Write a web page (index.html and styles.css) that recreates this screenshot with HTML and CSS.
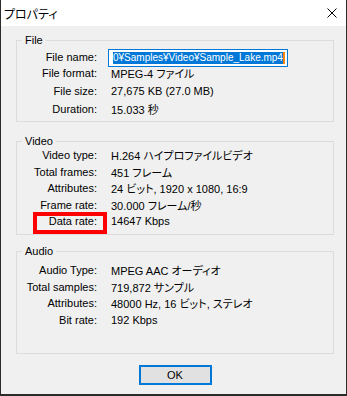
FILE: index.html
```html
<!DOCTYPE html>
<html lang="ja">
<head>
    <meta charset="UTF-8">
    <title>プロパティ</title>
    <link rel="stylesheet" href="styles.css">
</head>
<body>
    <div class="window">
        <div class="titlebar">
            <span class="title">プロパティ</span>
            <svg class="close" width="10" height="10" viewBox="0 0 10 10">
                <path d="M0.5 0.5 L9.5 9.5 M9.5 0.5 L0.5 9.5" stroke="#000" stroke-width="1" fill="none"/>
            </svg>
        </div>
        <div class="content">
            <section class="group group-file">
                <div class="group-title">File</div>
                <div class="rows rows-file">
                    <div class="row">
                        <span class="label">File name:</span>
                        <div class="field"><span class="selected">0¥Samples¥Video¥Sample_Lake.mp4</span><span class="caret"></span></div>
                    </div>
                    <div class="row"><span class="label">File format:</span><span class="value">MPEG-4 ファイル</span></div>
                    <div class="row"><span class="label">File size:</span><span class="value">27,675 KB (27.0 MB)</span></div>
                    <div class="row"><span class="label">Duration:</span><span class="value">15.033 秒</span></div>
                </div>
            </section>

            <section class="group group-video">
                <div class="group-title">Video</div>
                <div class="rows">
                    <div class="row"><span class="label">Video type:</span><span class="value">H.264 ハイプロファイルビデオ</span></div>
                    <div class="row"><span class="label">Total frames:</span><span class="value">451 フレーム</span></div>
                    <div class="row"><span class="label">Attributes:</span><span class="value">24 ビット, 1920 x 1080, 16:9</span></div>
                    <div class="row"><span class="label">Frame rate:</span><span class="value">30.000 フレーム/秒</span></div>
                    <div class="row row-marked">
                        <span class="label">Data rate:</span><span class="value">14647 Kbps</span>
                        <span class="mark"></span>
                    </div>
                </div>
            </section>

            <section class="group group-audio">
                <div class="group-title">Audio</div>
                <div class="rows rows-audio">
                    <div class="row"><span class="label">Audio Type:</span><span class="value">MPEG AAC オーディオ</span></div>
                    <div class="row"><span class="label">Total samples:</span><span class="value">719,872 サンプル</span></div>
                    <div class="row"><span class="label">Attributes:</span><span class="value">48000 Hz, 16 ビット, ステレオ</span></div>
                    <div class="row"><span class="label">Bit rate:</span><span class="value">192 Kbps</span></div>
                </div>
            </section>

            <div class="actions">
                <button class="btn">OK</button>
            </div>
        </div>
    </div>
</body>
</html>
```

FILE: styles.css
```css
/* Reset */
* {
    margin: 0;
    padding: 0;
    box-sizing: border-box;
}

body {
    font-family: "Liberation Sans", "Noto Sans CJK JP", sans-serif;
    font-size: 11px;
    font-feature-settings: "palt";
    color: #000;
    background-color: #f0f0f0;
}

/* Window frame */
.window {
    width: 347px;
    height: 396px;
    border: 1px solid #2b2b2b;
    border-top: none;
    border-bottom-width: 2px;
    background-color: #f0f0f0;
    display: flex;
    flex-direction: column;
}

.titlebar {
    height: 26px;
    background-color: #fff;
    display: flex;
    align-items: center;
    justify-content: space-between;
    padding: 0 9px 0 3px;
}

.title {
    font-family: "Noto Sans CJK JP", sans-serif;
    font-size: 12px;
}

.content {
    flex: 1;
    padding: 14px 12px 0 15px;
}

/* Group boxes */
.group {
    border: 1px solid #dcdcdc;
}

.group-file {
    height: 82px;
}

.group-video {
    height: 94px;
    margin-top: 19px;
}

.group-audio {
    height: 103px;
    margin-top: 16px;
}

.group-title {
    width: fit-content;
    margin: -8px 0 -1px 5px;
    padding: 0 3px;
    line-height: 14px;
    background-color: #f0f0f0;
}

/* Property rows */
.row {
    display: grid;
    grid-template-columns: 80px 1fr;
    column-gap: 14px;
    align-items: center;
    height: 16.5px;
    white-space: nowrap;
}

.rows-file .row {
    height: 18px;
}

.rows-audio {
    padding-top: 5px;
}

.label {
    text-align: right;
}

.field {
    align-self: start;
    margin: 3px 0 0 -3px;
    width: 180px;
    height: 18px;
    border: 1px solid #0078d7;
    background-color: #fff;
    padding: 2px 4px;
    display: flex;
    overflow: hidden;
}

.selected {
    background-color: #0078d7;
    color: #fff;
    font-size: 10px;
    line-height: 12px;
}

.caret {
    flex: none;
    width: 2px;
    height: 12px;
    background-color: #f7860d;
}

/* Red annotation box */
.row-marked {
    position: relative;
}

.mark {
    position: absolute;
    left: 16px;
    top: -1px;
    width: 74px;
    height: 22px;
    border: 4px solid #f00;
}

/* Button */
.actions {
    display: flex;
    justify-content: center;
    margin-top: 11px;
}

.btn {
    width: 73px;
    height: 20px;
    border: 2px solid #0078d7;
    background-color: #e1e1e1;
    font-family: "Liberation Sans", sans-serif;
    font-size: 11px;
    color: #000;
}
```
